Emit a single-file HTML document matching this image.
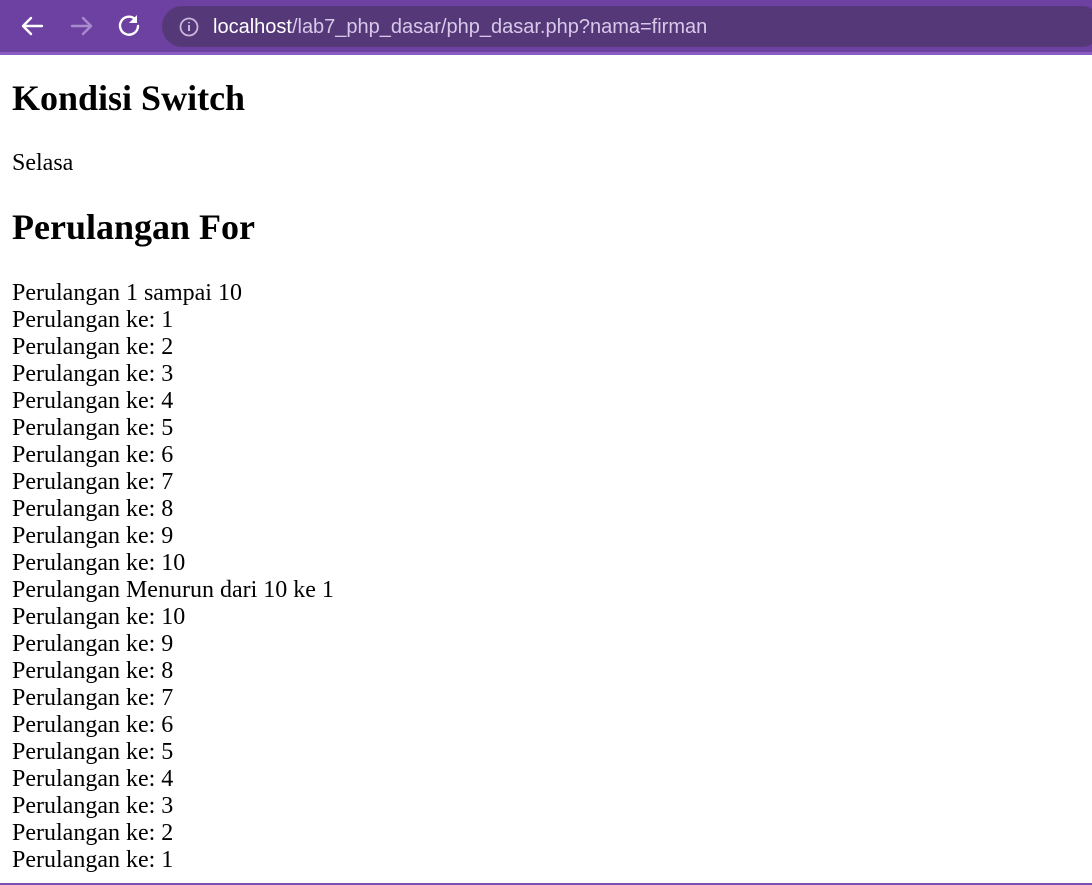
<!DOCTYPE html>
<html><head><meta charset="utf-8"><style>
html,body{margin:0;padding:0;width:1092px;height:885px;overflow:hidden;background:#fff;position:relative}
.bar{position:absolute;left:0;top:0;width:1092px;height:52px;background:#6d41a1}
.line{position:absolute;left:0;top:52px;width:1092px;height:3px;background:#8b5cc4}
.addr{position:absolute;left:162px;top:6px;width:940px;height:41px;border-radius:21px;background:#553878}
.url{position:absolute;left:213px;top:16px;font:20px "Liberation Sans",sans-serif;color:#d8c9ea;white-space:nowrap}
.url b{font-weight:normal;color:#fff}
.t{position:absolute;left:12px;font-family:"Liberation Serif",serif;color:#000;white-space:nowrap}
h2{margin:0;font-size:36px;line-height:40px;font-weight:bold}
.p{font-size:24px;line-height:27px}
.bot{position:absolute;left:0;top:883px;width:1092px;height:2px;background:#7d50b4}
</style></head><body>
<div class="bar"></div><div class="line"></div>
<div class="addr"></div>
<svg style="position:absolute;left:0;top:0" width="200" height="52">
<g fill="none" stroke="#fff" stroke-width="2.4" stroke-linecap="round" stroke-linejoin="round">
<path d="M42 26H24M31 18l-8 8 8 8"/>
<path d="M72 26h18M83 18l8 8-8 8" stroke="#a88bcc"/>
<path d="M138 26a9 9 0 1 1-3-7"/>
</g>
<path d="M137 15v8h-8z" fill="#fff"/>
<circle cx="189" cy="27" r="8.5" fill="none" stroke="#c9b8de" stroke-width="1.8"/>
<path d="M189 25v6M189 22v1.2" stroke="#c9b8de" stroke-width="2"/>
</svg>
<div class="url"><b>localhost</b>/lab7_php_dasar/php_dasar.php?nama=firman</div>
<div class="t" style="top:78px"><h2>Kondisi Switch</h2></div>
<div class="t p" style="top:150px">Selasa</div>
<div class="t" style="top:207px"><h2>Perulangan For</h2></div>
<div class="t p" style="top:280px">Perulangan 1 sampai 10<br>Perulangan ke: 1<br>Perulangan ke: 2<br>Perulangan ke: 3<br>Perulangan ke: 4<br>Perulangan ke: 5<br>Perulangan ke: 6<br>Perulangan ke: 7<br>Perulangan ke: 8<br>Perulangan ke: 9<br>Perulangan ke: 10<br>Perulangan Menurun dari 10 ke 1<br>Perulangan ke: 10<br>Perulangan ke: 9<br>Perulangan ke: 8<br>Perulangan ke: 7<br>Perulangan ke: 6<br>Perulangan ke: 5<br>Perulangan ke: 4<br>Perulangan ke: 3<br>Perulangan ke: 2<br>Perulangan ke: 1</div>
<div class="bot"></div>
</body></html>
